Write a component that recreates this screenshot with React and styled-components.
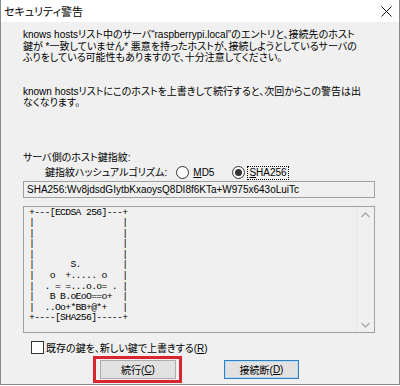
import React from "react";
import styled, { createGlobalStyle } from "styled-components";

const Global = createGlobalStyle`
  html, body { margin: 0; padding: 0; background: #ffffff; }
  body { font-family: "Liberation Sans", "Noto Sans CJK JP", sans-serif; }
`;

const Window = styled.div`
  box-sizing: border-box;
  width: 400px;
  height: 385px;
  border: 1px solid #8a8a8a;
  border-top: none;
  background: #f0f0f0;
  display: flex;
  flex-direction: column;
  font-family: "Liberation Sans", "Noto Sans CJK JP", sans-serif;
  font-feature-settings: "palt";
  color: #000;
`;

const TitleBar = styled.div`
  height: 22px;
  background: #ffffff;
  display: flex;
  align-items: center;
  justify-content: space-between;
  padding: 0 7px 0 3px;
  font-size: 11px;
`;

const CloseIcon = styled.svg`
  width: 11px;
  height: 11px;
  display: block;
`;

const Body = styled.div`
  display: flex;
  flex-direction: column;
  padding-left: 22px;
  font-size: 10px;
`;

const Para = styled.p`
  margin: ${(p) => p.$top}px 0 0 0;
  line-height: 11.5px;
  white-space: nowrap;
`;

const Label = styled.div`
  margin-top: ${(p) => p.$top || 0}px;
  margin-left: ${(p) => p.$indent || 0}px;
  line-height: 12px;
  height: ${(p) => p.$h || 12}px;
  display: flex;
  align-items: center;
  white-space: nowrap;
`;

const RadioGroup = styled.div`
  display: flex;
  align-items: center;
  margin-left: ${(p) => p.$left}px;
  gap: 3px;
`;

const RadioCircle = styled.span`
  box-sizing: border-box;
  width: 13px;
  height: 13px;
  border-radius: 50%;
  border: 1px solid #333;
  background: #fff;
  display: flex;
  align-items: center;
  justify-content: center;
  &::after {
    content: "";
    width: 7px;
    height: 7px;
    border-radius: 50%;
    background: ${(p) => (p.$on ? "#333" : "transparent")};
  }
`;

const RadioText = styled.span`
  padding: 0 1px;
  outline: ${(p) => (p.$focus ? "1px dotted #000" : "none")};
  outline-offset: 0;
  line-height: 12px;
`;

const U = styled.span`
  text-decoration: underline;
`;

const TextBox = styled.div`
  box-sizing: border-box;
  width: 352px;
  height: 17px;
  margin-top: 1px;
  border: 1px solid #a0a0a0;
  background: #f0f0f0;
  padding: 0 3px;
  line-height: 15px;
  white-space: nowrap;
`;

const ArtBox = styled.div`
  box-sizing: border-box;
  width: 352px;
  height: 127px;
  margin-top: 8px;
  border: 1px solid #a0a0a0;
  background: #f0f0f0;
  display: flex;
`;

const Art = styled.pre`
  flex: 1;
  margin: 0;
  padding: 1px 0 0 5px;
  font-family: "Liberation Mono", "DejaVu Sans Mono", monospace;
  font-size: 9.8px;
  letter-spacing: -0.7px;
  line-height: 10.6px;
  color: #000;
`;

const ScrollBar = styled.div`
  width: 17px;
  border-left: 1px solid #e6e6e6;
  display: flex;
  flex-direction: column;
  justify-content: space-between;
  align-items: center;
  padding: 5px 0 4px;
`;

const Arrow = styled.svg`
  width: 9px;
  height: 6px;
  display: block;
`;

const CheckRow = styled.label`
  display: flex;
  align-items: center;
  gap: 2px;
  margin: 8px 0 0 8px;
  height: 14px;
  white-space: nowrap;
`;

const CheckBox = styled.span`
  box-sizing: border-box;
  width: 13px;
  height: 13px;
  border: 1px solid #333;
  background: #fff;
`;

const ButtonRow = styled.div`
  display: flex;
  align-items: center;
  gap: 42px;
  margin: 1px 0 0 70px;
`;

const Highlight = styled.div`
  border: 3px solid #d9252f;
  padding: 1px 3px 1px 4px;
`;

const Button = styled.div`
  box-sizing: border-box;
  width: ${(p) => p.$w}px;
  height: 19px;
  background: #e1e1e1;
  border: 1px solid ${(p) => (p.$default ? "#2f7fc0" : "#adadad")};
  box-shadow: ${(p) => (p.$default ? "inset 0 0 0 1px #b9dcf3" : "none")};
  display: flex;
  align-items: center;
  justify-content: center;
  font-size: 10px;
`;

const art = [
  "+---[ECDSA 256]---+",
  "|                 |",
  "|                 |",
  "|                 |",
  "|                 |",
  "|       S.        |",
  "|   o  +..... o   |",
  "|  . = =...o.o= . |",
  "|   B B.oEoO==o+  |",
  "|  ..Oo+*BB+@*+   |",
  "+----[SHA256]-----+",
].join("\n");

export default function App() {
  return (
    <>
      <Global />
      <Window>
        <TitleBar>
          <span>セキュリティ警告</span>
          <CloseIcon viewBox="0 0 11 11">
            <path d="M0.5 0.5 L10.5 10.5 M10.5 0.5 L0.5 10.5" stroke="#111" strokeWidth="1" />
          </CloseIcon>
        </TitleBar>
        <Body>
          <Para $top={7}>
            knows hostsリスト中のサーバ“raspberrypi.local”のエントリと、接続先のホスト
            <br />
            鍵が *一致していません* 悪意を持ったホストが、接続しようとしているサーバの
            <br />
            ふりをしている可能性もありますので、十分注意してください。
          </Para>
          <Para $top={22}>
            known hostsリストにこのホストを上書きして続行すると、次回からこの警告は出
            <br />
            なくなります。
          </Para>
          <Label $top={43}>サーバ側のホスト鍵指紋:</Label>
          <Label $top={2} $indent={22} $h={14}>
            鍵指紋ハッシュアルゴリズム:
            <RadioGroup $left={9}>
              <RadioCircle />
              <RadioText>
                <U>M</U>D5
              </RadioText>
            </RadioGroup>
            <RadioGroup $left={17}>
              <RadioCircle $on />
              <RadioText $focus>
                <U>S</U>HA256
              </RadioText>
            </RadioGroup>
          </Label>
          <TextBox>SHA256:Wv8jdsdGIytbKxaoysQ8DI8f6KTa+W975x643oLuiTc</TextBox>
          <ArtBox>
            <Art>{art}</Art>
            <ScrollBar>
              <Arrow viewBox="0 0 9 6">
                <path d="M0.5 5 L4.5 1 L8.5 5" fill="none" stroke="#a8a8a8" strokeWidth="1.3" />
              </Arrow>
              <Arrow viewBox="0 0 9 6">
                <path d="M0.5 1 L4.5 5 L8.5 1" fill="none" stroke="#a8a8a8" strokeWidth="1.3" />
              </Arrow>
            </ScrollBar>
          </ArtBox>
          <CheckRow>
            <CheckBox />
            <span>
              既存の鍵を、新しい鍵で上書きする(<U>R</U>)
            </span>
          </CheckRow>
          <ButtonRow>
            <Highlight>
              <Button $w={76}>
                続行(<U>C</U>)
              </Button>
            </Highlight>
            <Button $w={75} $default>
              接続断(<U>D</U>)
            </Button>
          </ButtonRow>
        </Body>
      </Window>
    </>
  );
}
